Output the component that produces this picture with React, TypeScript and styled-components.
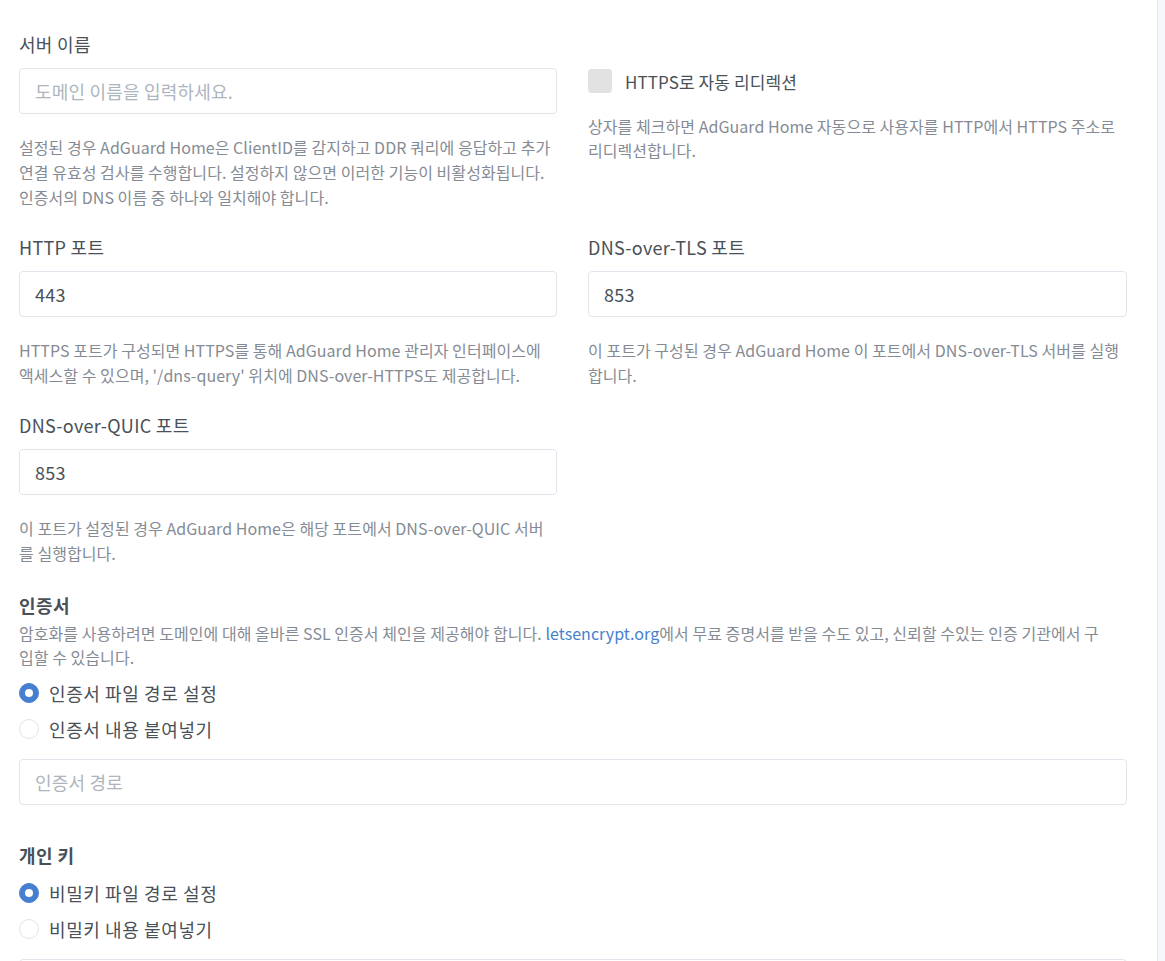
import React from "react";
import styled, { createGlobalStyle } from "styled-components";

const GlobalStyle = createGlobalStyle`
  html, body {
    margin: 0;
    padding: 0;
    background: #f5f7fb;
  }
  body {
    font-family: "Noto Sans CJK KR", "Open Sans", sans-serif;
    color: #495057;
    overflow: hidden;
  }
  * { box-sizing: border-box; }
`;

const Page = styled.div`
  display: flex;
  height: 961px;
  overflow: hidden;
`;

const Card = styled.div`
  flex: 0 0 1158px;
  background: #ffffff;
  border-right: 1px solid #e6e9f0;
  padding: 32px 30px 0 19px;
`;

const Grid = styled.div`
  display: grid;
  grid-template-columns: 538px 539px;
  column-gap: 31px;
  align-items: start;
`;

const Group = styled.div<{ $pad?: number }>`
  display: flex;
  flex-direction: column;
  padding-top: ${(p) => p.$pad ?? 0}px;
  margin-bottom: 25px;
`;

const Label = styled.div`
  font-size: 18px;
  letter-spacing: 0.3px;
  line-height: 24px;
  color: #495057;
  margin-bottom: 12px;
`;

const Input = styled.div<{ $placeholder?: boolean }>`
  height: 46px;
  border: 1px solid #e0e5ec;
  border-radius: 4px;
  padding: 0 15px;
  display: flex;
  align-items: center;
  font-size: 18px;
  letter-spacing: 0.2px;
  color: ${(p) => (p.$placeholder ? "#adb5bd" : "#495057")};
  background: #fff;
  overflow: hidden;
  white-space: nowrap;
`;

const Help = styled.div<{ $lh?: number; $mt?: number }>`
  font-size: 16px;
  letter-spacing: 0.05px;
  line-height: ${(p) => p.$lh ?? 25}px;
  color: #858b94;
  margin-top: ${(p) => p.$mt ?? 21}px;
`;

const CheckRow = styled.label`
  display: flex;
  align-items: center;
  gap: 13px;
  height: 24px;
  font-size: 17px;
  letter-spacing: 0.1px;
  color: #495057;
`;

const CheckBox = styled.span`
  width: 24px;
  height: 24px;
  border-radius: 4px;
  background: #e2e2e2;
  flex: 0 0 24px;
`;

const Section = styled.div<{ $mt?: number }>`
  margin-top: ${(p) => p.$mt ?? 0}px;
`;

const Heading = styled.div`
  font-size: 18px;
  letter-spacing: 0.4px;
  line-height: 24px;
  font-weight: 700;
  color: #495057;
`;

const Link = styled.a`
  color: #467fcf;
  text-decoration: none;
`;

const RadioList = styled.div<{ $mt: number }>`
  display: flex;
  flex-direction: column;
  gap: 12px;
  margin-top: ${(p) => p.$mt}px;
`;

const RadioRow = styled.label`
  display: flex;
  align-items: center;
  gap: 10px;
  height: 24px;
  font-size: 18px;
  letter-spacing: 0.6px;
  color: #495057;
`;

const RadioDot = styled.span<{ $checked?: boolean }>`
  width: 20px;
  height: 20px;
  border-radius: 50%;
  flex: 0 0 20px;
  display: flex;
  align-items: center;
  justify-content: center;
  background: ${(p) => (p.$checked ? "#467fcf" : "#fff")};
  border: 1px solid ${(p) => (p.$checked ? "#467fcf" : "#dfe4eb")};
  &::after {
    content: "";
    width: 8px;
    height: 8px;
    border-radius: 50%;
    background: #fff;
    display: ${(p) => (p.$checked ? "block" : "none")};
  }
`;

const FullInput = styled(Input)<{ $mt: number }>`
  margin-top: ${(p) => p.$mt}px;
`;

const Radio: React.FC<{ checked?: boolean; children: React.ReactNode }> = ({
  checked,
  children,
}) => (
  <RadioRow>
    <RadioDot $checked={checked} />
    {children}
  </RadioRow>
);

export default function App() {
  return (
    <>
      <GlobalStyle />
      <Page>
        <Card>
          <Grid>
            <Group>
              <Label>서버 이름</Label>
              <Input $placeholder>도메인 이름을 입력하세요.</Input>
              <Help>
                설정된 경우 AdGuard Home은 ClientID를 감지하고 DDR 쿼리에 응답하고 추가
                <br />
                연결 유효성 검사를 수행합니다. 설정하지 않으면 이러한 기능이 비활성화됩니다.
                <br />
                인증서의 DNS 이름 중 하나와 일치해야 합니다.
              </Help>
            </Group>
            <Group $pad={37}>
              <CheckRow>
                <CheckBox />
                HTTPS로 자동 리디렉션
              </CheckRow>
              <Help $lh={24} $mt={21}>
                상자를 체크하면 AdGuard Home 자동으로 사용자를 HTTP에서 HTTPS 주소로
                <br />
                리디렉션합니다.
              </Help>
            </Group>

            <Group>
              <Label>HTTP 포트</Label>
              <Input>443</Input>
              <Help>
                HTTPS 포트가 구성되면 HTTPS를 통해 AdGuard Home 관리자 인터페이스에
                <br />
                액세스할 수 있으며, '/dns-query' 위치에 DNS-over-HTTPS도 제공합니다.
              </Help>
            </Group>
            <Group>
              <Label>DNS-over-TLS 포트</Label>
              <Input>853</Input>
              <Help>
                이 포트가 구성된 경우 AdGuard Home 이 포트에서 DNS-over-TLS 서버를 실행
                <br />
                합니다.
              </Help>
            </Group>

            <Group>
              <Label>DNS-over-QUIC 포트</Label>
              <Input>853</Input>
              <Help>
                이 포트가 설정된 경우 AdGuard Home은 해당 포트에서 DNS-over-QUIC 서버
                <br />
                를 실행합니다.
              </Help>
            </Group>
            <div />
          </Grid>

          <Section $mt={2}>
            <Heading>인증서</Heading>
            <Help $lh={24} $mt={4}>
              암호화를 사용하려면 도메인에 대해 올바른 SSL 인증서 체인을 제공해야 합니다.{" "}
              <Link href="#">letsencrypt.org</Link>에서 무료 증명서를 받을 수도 있고, 신뢰할
              수있는 인증 기관에서 구
              <br />
              입할 수 있습니다.
            </Help>
            <RadioList $mt={12}>
              <Radio checked>인증서 파일 경로 설정</Radio>
              <Radio>인증서 내용 붙여넣기</Radio>
            </RadioList>
            <FullInput $placeholder $mt={18}>
              인증서 경로
            </FullInput>
          </Section>

          <Section $mt={38}>
            <Heading>개인 키</Heading>
            <RadioList $mt={14}>
              <Radio checked>비밀키 파일 경로 설정</Radio>
              <Radio>비밀키 내용 붙여넣기</Radio>
            </RadioList>
            <FullInput $placeholder $mt={18} />
          </Section>
        </Card>
      </Page>
    </>
  );
}
